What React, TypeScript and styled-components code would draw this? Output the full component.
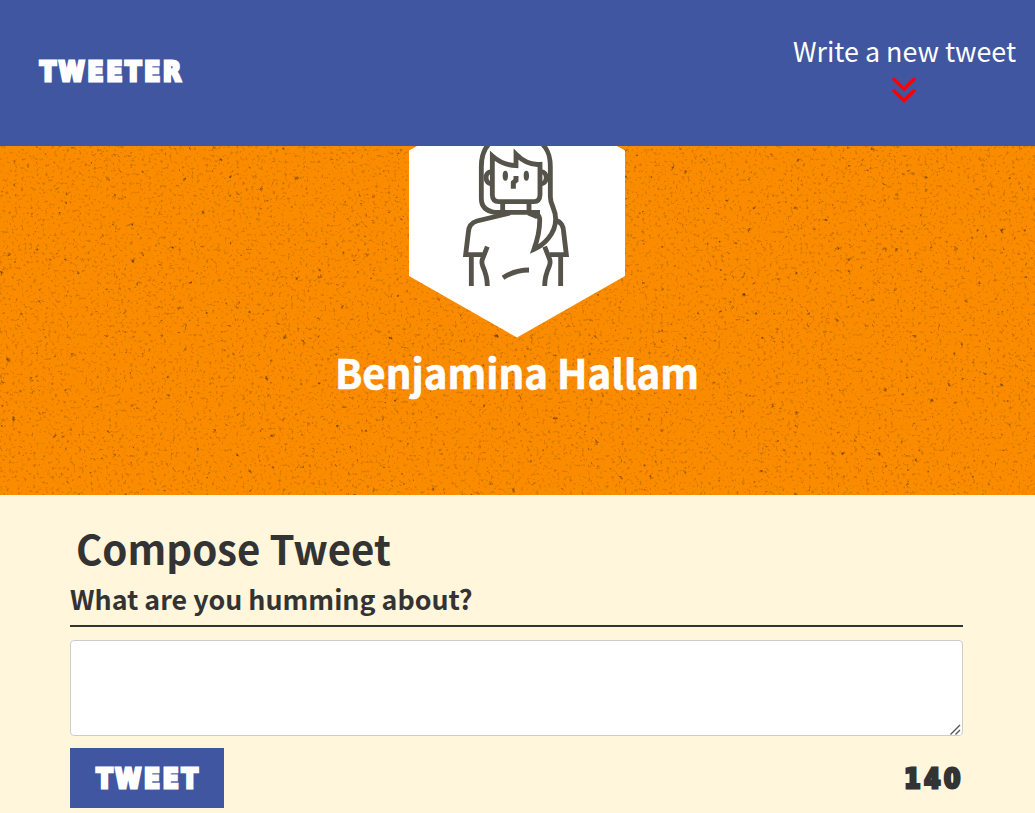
import React from 'react';
import styled, { createGlobalStyle, css } from 'styled-components';

const GlobalStyle = createGlobalStyle`
  *, *::before, *::after { box-sizing: border-box; }
  html, body { margin: 0; height: 813px; overflow: hidden; }
  body {
    background: #fff6dc;
    color: #333;
    font-family: "Noto Sans CJK JP", "Open Sans", sans-serif;
  }
`;

const blockLetters = css`
  font-family: "DejaVu Sans Condensed", "DejaVu Sans", sans-serif;
  font-stretch: condensed;
  font-weight: 700;
  font-size: 26px;
  line-height: 30px;
  letter-spacing: 2.9px;
  -webkit-text-stroke: 2.8px currentColor;
`;

const Header = styled.header`
  display: flex;
  align-items: flex-start;
  justify-content: space-between;
  height: 146px;
  padding: 31px 19px 0 40px;
  background: #4056a1;
  color: #fff;
`;

const Logo = styled.span`
  ${blockLetters}
  margin-top: 26px;
`;

const NewTweet = styled.a`
  display: flex;
  flex-direction: column;
  align-items: center;
  width: 223px;
  font-size: 26.85px;
  line-height: 40px;
  white-space: nowrap;
`;

const Chevrons = styled.svg`
  display: block;
  width: 24px;
  height: 26px;
  margin: 6px 1px 0 0;
  fill: none;
  stroke: #f00;
  stroke-width: 3.4;
  stroke-linecap: round;
`;

const Profile = styled.section`
  position: relative;
  display: flex;
  flex-direction: column;
  align-items: center;
  height: 349px;
  padding-right: 1px;
  background: #fb8c00;
  overflow: hidden;
`;

const Speckles = styled.svg`
  position: absolute;
  inset: 0;
  width: 100%;
  height: 100%;
`;

const Avatar = styled.svg`
  position: relative;
  display: block;
  width: 216px;
  height: 192px;
`;

const Name = styled.h2`
  position: relative;
  margin: 4px 0 0;
  font-size: 40.2px;
  line-height: 60px;
  font-weight: 700;
  color: #fff;
  -webkit-text-stroke: 0.6px #fff;
  white-space: nowrap;
`;

const Composer = styled.main`
  display: flex;
  flex-direction: column;
  padding: 28px 72px 0 70px;
`;

const Title = styled.h2`
  margin: 0 0 0 6px;
  font-size: 40.2px;
  line-height: 50px;
  font-weight: 700;
`;

const Prompt = styled.h3`
  margin: 0 0 13px;
  height: 54px;
  padding-top: 6px;
  border-bottom: 2px solid #333;
  font-size: 26.8px;
  line-height: 40px;
  font-weight: 700;
`;

const TweetBox = styled.textarea`
  display: block;
  width: 100%;
  height: 96px;
  border: 1px solid #ccc;
  border-radius: 4px;
  background: #fff;
  resize: both;
`;

const ResizeGrip = styled.svg`
  position: absolute;
  right: 2px;
  bottom: 1px;
  width: 11px;
  height: 11px;
  background: #fff;
  stroke: #555;
  stroke-width: 1.4;
  pointer-events: none;
`;

const Field = styled.div`
  position: relative;
`;

const Actions = styled.div`
  display: flex;
  justify-content: space-between;
  align-items: center;
  height: 60px;
  margin-top: 12px;
`;

const Submit = styled.button`
  ${blockLetters}
  width: 154px;
  height: 60px;
  padding: 2px 0 0 3px;
  border: 0;
  background: #4056a1;
  color: #fff;
`;

const Counter = styled.output`
  ${blockLetters}
  padding-top: 2px;
  letter-spacing: 3.6px;
  margin-right: -1px;
`;

export default function App() {
  return (
    <>
      <GlobalStyle />
      <Header>
        <Logo>TWEETER</Logo>
        <NewTweet>
          Write a new tweet
          <Chevrons viewBox="0 0 24 26">
            <path d="M2 2.2 12 12 22 2.2M2 13.7 12 23.5 22 13.7" />
          </Chevrons>
        </NewTweet>
      </Header>
      <Profile>
        <Speckles>
          <filter id="grain" x="0" y="0" width="100%" height="100%" colorInterpolationFilters="sRGB">
            <feTurbulence type="fractalNoise" baseFrequency="0.33" numOctaves="2" seed="8" />
            <feColorMatrix values="0 0 0 0 .5  0 0 0 0 .27  0 0 0 0 0  1.5 0 0 0 -.86" />
          </filter>
          <filter id="flecks" x="0" y="0" width="100%" height="100%" colorInterpolationFilters="sRGB">
            <feTurbulence type="fractalNoise" baseFrequency="0.17" numOctaves="3" seed="21" />
            <feColorMatrix values="0 0 0 0 .45  0 0 0 0 .25  0 0 0 0 0  5 0 0 0 -3.6" />
          </filter>
          <rect width="100%" height="100%" filter="url(#grain)" />
          <rect width="100%" height="100%" filter="url(#flecks)" />
        </Speckles>
        <Avatar viewBox="0 0 216 192">
          <path fill="#fff" d="M8 0H208L216 4.500V130L108 191.500 0 130V4.500Z" />
          <g transform="translate(-9 -6) scale(.33333)" fill="none" stroke="#56534a" strokeWidth="14.500">
            <path d="M420 217H285C259 214 244 202 244 175V80C244 45 253 22 274 5M419 5C442 23 451 44 451 80V170C451 196 467 206 467 237C467 282 430 316 402 328C412 300 420 260 419 236C417 222 402 217 385 217" />
            <path d="M277 48V165Q278 185 296 185H402Q419 185 420 165V73C392 76 366 61 348 43V77C320 76 296 65 277 48Z" />
            <path d="M274 95C253 95 253 130 274 132M423 95C444 95 444 130 423 132" />
            <path d="M308 188V216M387 188V216" />
            <path d="M330 219 231 243Q206 250 205 278L197 344H248M385 219 412 230M467 240Q490 248 491 276L499 344H449" />
            <path d="M262 320 247 358Q244 367 248 378C257 398 262 412 262 438M434 320 449 358Q452 367 448 378C439 398 434 412 434 438M214 346V438M482 346V438" />
            <path d="M309 413Q345 390 387 390" />
            <path strokeWidth="15" d="M348 108V121L340 128V146" />
            <g fill="#56534a" stroke="none">
              <ellipse cx="316" cy="107" rx="8" ry="15" />
              <ellipse cx="379" cy="107" rx="8" ry="15" />
            </g>
          </g>
        </Avatar>
        <Name>Benjamina Hallam</Name>
      </Profile>
      <Composer>
        <Title>Compose Tweet</Title>
        <Prompt>What are you humming about?</Prompt>
        <Field>
          <TweetBox />
          <ResizeGrip viewBox="0 0 11 11">
            <path d="M.5 10.500 10 1M5.500 10.500 10 6" />
          </ResizeGrip>
        </Field>
        <Actions>
          <Submit>TWEET</Submit>
          <Counter>140</Counter>
        </Actions>
      </Composer>
    </>
  );
}
